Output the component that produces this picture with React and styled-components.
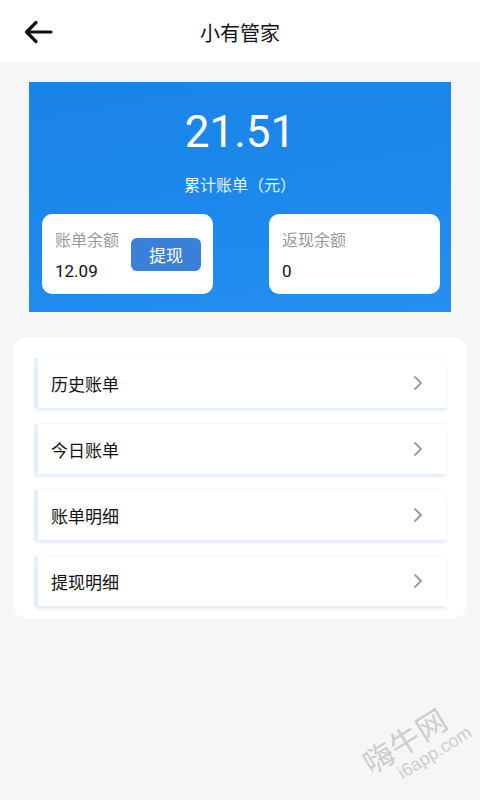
import React from "react";
import styled, { createGlobalStyle } from "styled-components";

const Global = createGlobalStyle`
  html, body { margin: 0; padding: 0; }
  body {
    background: #f6f6f6;
    font-family: Roboto, "Noto Sans CJK SC", "Noto Sans", sans-serif;
    width: 480px;
    height: 800px;
    overflow: hidden;
  }
`;

const Page = styled.div`
  position: relative;
  width: 480px;
  height: 800px;
  background: #f6f6f6;
`;

const Header = styled.header`
  height: 62px;
  background: #fff;
  display: grid;
  grid-template-columns: 80px 1fr 80px;
  align-items: center;
`;

const Back = styled.div`
  padding-left: 22px;
  padding-top: 2px;
  display: flex;
  align-items: center;
`;

const Title = styled.h1`
  margin: 0;
  text-align: center;
  font-size: 20px;
  font-weight: 400;
  color: #111;
  padding-top: 2px;
`;

const Banner = styled.section`
  margin: 20px 29px 0 29px;
  height: 230px;
  background: linear-gradient(170deg, #1a84e8 0%, #1d88ec 55%, #2590f1 100%);
  display: flex;
  flex-direction: column;
  align-items: center;
  overflow: hidden;
`;

const Amount = styled.div`
  margin-top: 24px;
  font-size: 44px;
  line-height: 52px;
  color: #fff;
  font-family: Roboto, sans-serif;
`;

const Caption = styled.div`
  margin-top: 17px;
  font-size: 16px;
  line-height: 22px;
  color: #eaf4ff;
`;

const Cards = styled.div`
  margin-top: 17px;
  width: 100%;
  box-sizing: border-box;
  padding: 0 11px 0 13px;
  display: flex;
  justify-content: space-between;
`;

const Card = styled.div`
  width: 171px;
  height: 80px;
  background: #fff;
  border-radius: 10px;
  box-sizing: border-box;
  padding: 16px 0 0 13px;
  display: flex;
  align-items: flex-start;
  gap: 12px;
`;

const CardText = styled.div`
  display: flex;
  flex-direction: column;
`;

const CardLabel = styled.div`
  font-size: 16px;
  line-height: 22px;
  color: #999;
`;

const CardValue = styled.div`
  margin-top: 8px;
  font-size: 17px;
  line-height: 22px;
  color: #111;
`;

const WithdrawBtn = styled.div`
  width: 70px;
  height: 33px;
  margin-top: 8px;
  border-radius: 6px;
  background: #3a7fd8;
  color: #fff;
  font-size: 17px;
  display: flex;
  align-items: center;
  justify-content: center;
`;

const ListPanel = styled.section`
  margin: 25px 14px 0 14px;
  background: #fff;
  border-radius: 12px;
  padding: 21px 19px 11px 20px;
  display: flex;
  flex-direction: column;
  gap: 15px;
`;

const Item = styled.div`
  height: 50px;
  background: #fff;
  border-left: 4px solid #e6effa;
  box-shadow: 0 4px 3px -1px #e3eefb, 0 -1px 2px #f3f6fa;
  display: flex;
  align-items: center;
  justify-content: space-between;
  padding: 0 24px 0 13px;
  margin-bottom: 1px;
`;

const ItemText = styled.span`
  font-size: 17px;
  color: #111;
`;

const Watermark = styled.div`
  position: absolute;
  right: 10px;
  bottom: 30px;
  transform: rotate(-32deg);
  transform-origin: center;
  color: #cdcdcd;
  display: flex;
  flex-direction: column;
  align-items: flex-end;
  line-height: 1;
`;

const WmBig = styled.span`
  font-size: 30px;
  letter-spacing: 1px;
  margin-right: 14px;
`;

const WmSmall = styled.span`
  font-size: 18px;
  font-family: "Liberation Sans", sans-serif;
`;

const Arrow = () => (
  <svg width="32" height="26" viewBox="0 0 32 26">
    <path d="M29 13 H5 M14 3.5 L4.5 13 L14 22.5" fill="none" stroke="#111" strokeWidth="3.2" strokeLinecap="round" strokeLinejoin="round" />
  </svg>
);

const Chevron = () => (
  <svg width="10" height="16" viewBox="0 0 10 16">
    <path d="M2 2 L8 8 L2 14" fill="none" stroke="#9a9a9a" strokeWidth="1.8" strokeLinecap="round" strokeLinejoin="round" />
  </svg>
);

const items = ["历史账单", "今日账单", "账单明细", "提现明细"];

export default function App() {
  return (
    <Page>
      <Global />
      <Header>
        <Back><Arrow /></Back>
        <Title>小有管家</Title>
        <div />
      </Header>
      <Banner>
        <Amount>21.51</Amount>
        <Caption>累计账单（元）</Caption>
        <Cards>
          <Card>
            <CardText>
              <CardLabel>账单余额</CardLabel>
              <CardValue>12.09</CardValue>
            </CardText>
            <WithdrawBtn>提现</WithdrawBtn>
          </Card>
          <Card>
            <CardText>
              <CardLabel>返现余额</CardLabel>
              <CardValue>0</CardValue>
            </CardText>
          </Card>
        </Cards>
      </Banner>
      <ListPanel>
        {items.map((t) => (
          <Item key={t}>
            <ItemText>{t}</ItemText>
            <Chevron />
          </Item>
        ))}
      </ListPanel>
      <Watermark>
        <WmBig>嗨牛网</WmBig>
        <WmSmall>i6app.com</WmSmall>
      </Watermark>
    </Page>
  );
}
